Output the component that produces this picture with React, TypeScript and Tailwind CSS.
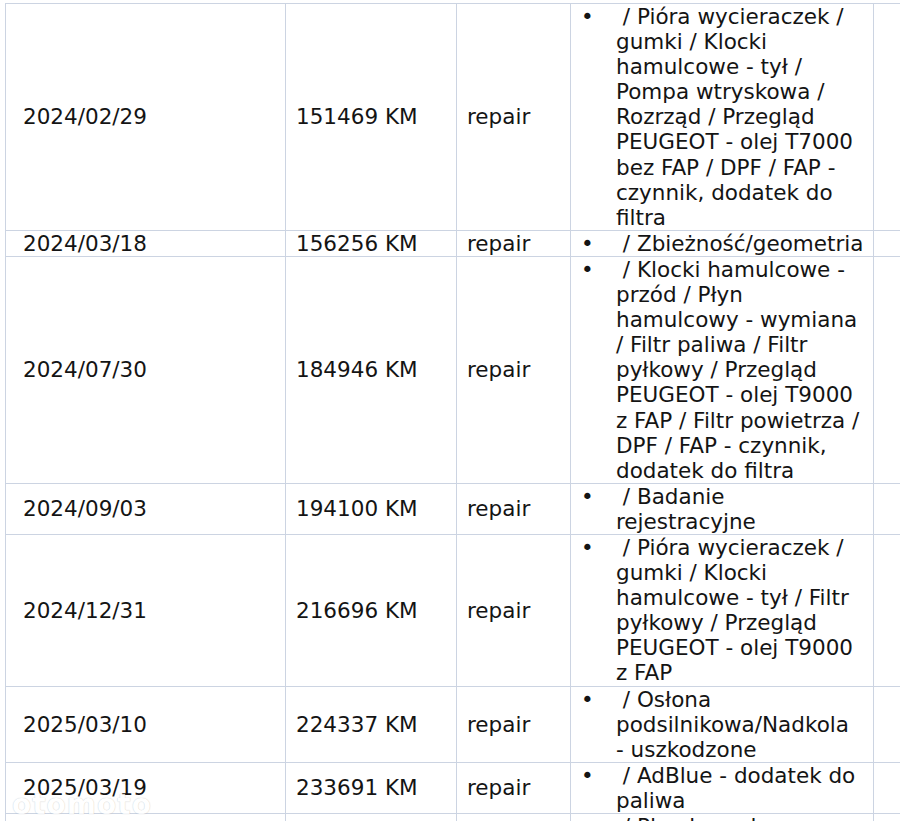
import React from "react";

type Row = { date: string; km: string; type: string; text: string; nowrap?: boolean };

const rows: Row[] = [
  {
    date: "2024/02/29",
    km: "151469 KM",
    type: "repair",
    text: "/ Pióra wycieraczek / gumki / Klocki hamulcowe - tył / Pompa wtryskowa / Rozrząd / Przegląd PEUGEOT - olej T7000 bez FAP / DPF / FAP - czynnik, dodatek do filtra",
  },
  { date: "2024/03/18", km: "156256 KM", type: "repair", text: "/ Zbieżność/geometria", nowrap: true },
  {
    date: "2024/07/30",
    km: "184946 KM",
    type: "repair",
    text: "/ Klocki hamulcowe - przód / Płyn hamulcowy - wymiana / Filtr paliwa / Filtr pyłkowy / Przegląd PEUGEOT - olej T9000 z FAP / Filtr powietrza / DPF / FAP - czynnik, dodatek do filtra",
  },
  { date: "2024/09/03", km: "194100 KM", type: "repair", text: "/ Badanie rejestracyjne" },
  {
    date: "2024/12/31",
    km: "216696 KM",
    type: "repair",
    text: "/ Pióra wycieraczek / gumki / Klocki hamulcowe - tył / Filtr pyłkowy / Przegląd PEUGEOT - olej T9000 z FAP",
  },
  {
    date: "2025/03/10",
    km: "224337 KM",
    type: "repair",
    text: "/ Osłona podsilnikowa/Nadkola - uszkodzone",
  },
  { date: "2025/03/19", km: "233691 KM", type: "repair", text: "/ AdBlue - dodatek do paliwa" },
  {
    date: "2025/05/12",
    km: "241870 KM",
    type: "repair",
    text: "/ Płyn hamulcowy - wymiana / Filtr paliwa / Filtr powietrza / Filtr pyłkowy / Przegląd PEUGEOT - olej T9000 z FAP / DPF / FAP - czynnik, dodatek do filtra",
  },
];

const bd = "border border-[#ccd4e2]";

export default function App() {
  return (
    <div
      className="relative w-[900px] h-[821px] overflow-hidden bg-white pt-[3px] pl-[5px] text-[21.5px] leading-[25.1px] text-[#141414]"
      style={{ fontFamily: '"DejaVu Sans", "Liberation Sans", sans-serif' }}
    >
      <table className={`table-fixed border-collapse w-[980px] ${bd}`}>
        <colgroup>
          <col className="w-[280px]" />
          <col className="w-[171px]" />
          <col className="w-[114px]" />
          <col className="w-[303px]" />
          <col className="w-[112px]" />
        </colgroup>
        <tbody>
          {rows.map((r) => (
            <tr key={r.date}>
              <td className={`${bd} align-middle pl-[17px] py-0`}>{r.date}</td>
              <td className={`${bd} align-middle pl-[10px] py-0`}>{r.km}</td>
              <td className={`${bd} align-middle pl-[10px] py-0`}>{r.type}</td>
              <td className={`${bd} align-top p-0`}>
                <div className="flex">
                  <span className="w-[45px] shrink-0 pl-[10px]">•</span>
                  <div className={r.nowrap ? "w-[246px] whitespace-nowrap" : "w-[246px]"}>
                    {"\u00a0" + r.text}
                  </div>
                </div>
              </td>
              <td className={`${bd}`}></td>
            </tr>
          ))}
        </tbody>
      </table>
      <span className="absolute left-[12px] top-[790px] text-[28px] leading-[30px] font-bold tracking-[1px] text-white opacity-80 [text-shadow:0_0_1px_rgba(0,0,0,0.3)] select-none">
        otomoto
      </span>
    </div>
  );
}
